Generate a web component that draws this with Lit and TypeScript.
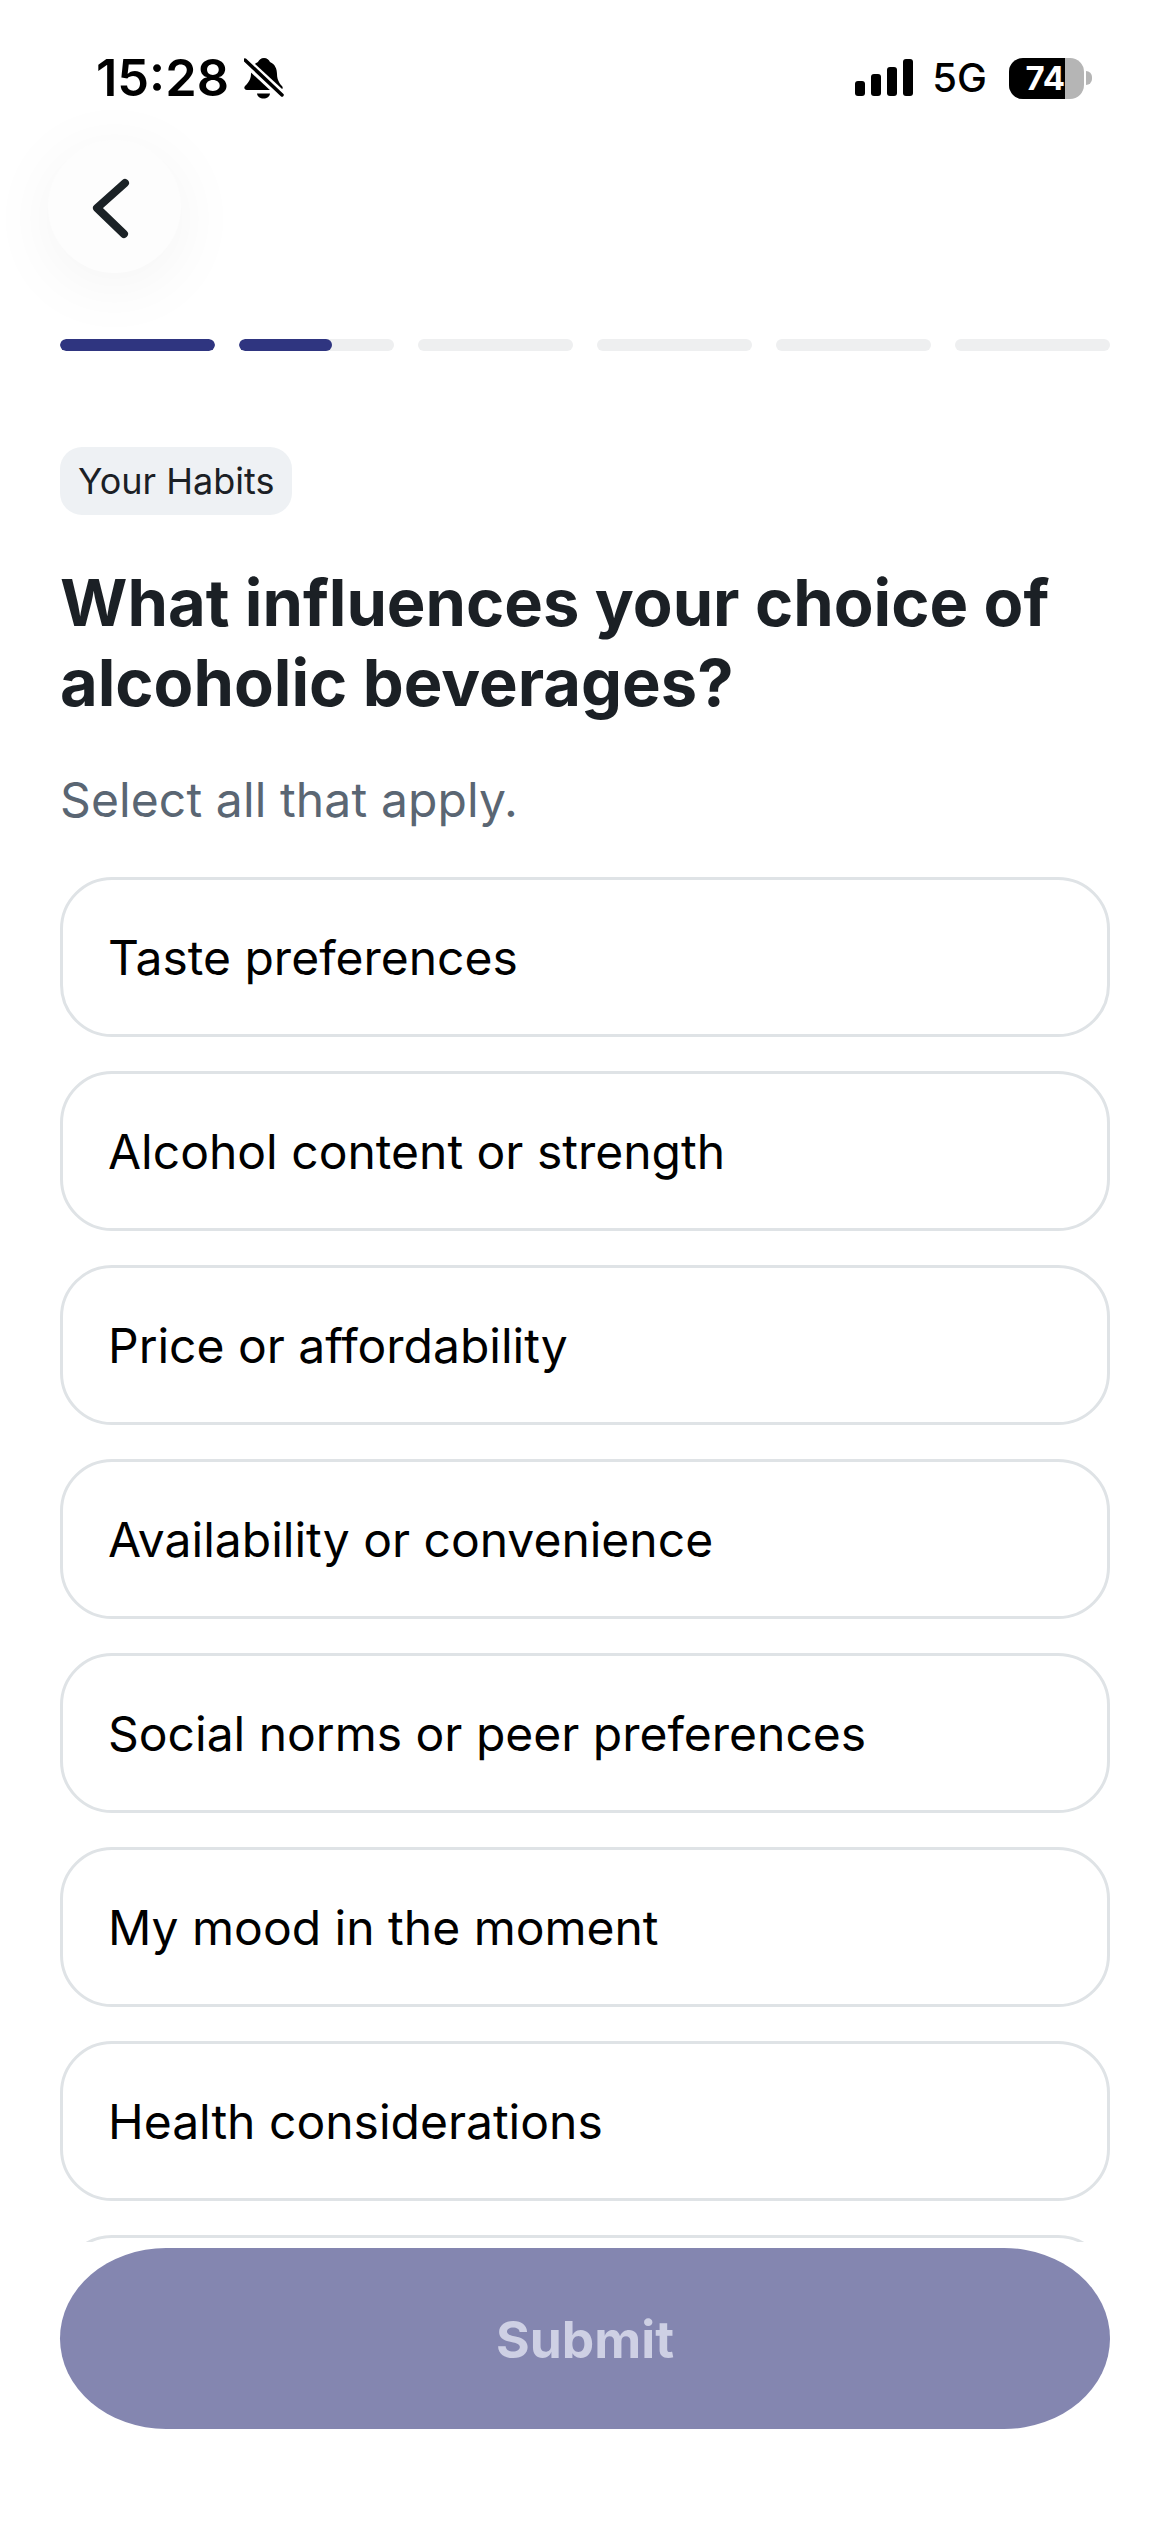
import { LitElement, html, css } from "lit";
import { customElement } from "lit/decorators.js";

const OPTIONS = [
  "Taste preferences",
  "Alcohol content or strength",
  "Price or affordability",
  "Availability or convenience",
  "Social norms or peer preferences",
  "My mood in the moment",
  "Health considerations",
  "",
];
const SEGMENTS = [100, 60, 0, 0, 0, 0];

@customElement("app-root")
export class AppRoot extends LitElement {
  static styles = css`
    :host {
      display: flex;
      flex-direction: column;
      width: 1170px;
      height: 2532px;
      overflow: hidden;
      background: #fff;
      font-family: Inter, "Liberation Sans", sans-serif;
      color: #1b2025;
    }
    .status {
      flex: none;
      height: 140px;
      display: flex;
      justify-content: space-between;
      align-items: flex-start;
      padding: 51px 78px 0 96px;
      box-sizing: border-box;
      color: #000;
    }
    .status-left,
    .status-right {
      display: flex;
      align-items: center;
    }
    .time {
      font-size: 50.5px;
      font-weight: 600;
      line-height: 54px;
    }
    .bell {
      width: 40px;
      height: 42px;
      margin-left: 15px;
    }
    .signal {
      width: 58px;
      height: 38px;
      display: block;
    }
    .net {
      font-size: 40px;
      font-weight: 500;
      line-height: 54px;
      margin-left: 19px;
    }
    .battery {
      display: flex;
      margin-left: 22px;
      width: 75px;
      height: 41px;
      border-radius: 14px;
      overflow: hidden;
      background: #b5b5b5;
    }
    .battery-fill {
      width: 56px;
      background: #000;
      color: #fff;
      font-size: 33px;
      font-weight: 700;
      line-height: 41px;
      text-align: right;
      box-sizing: border-box;
      white-space: nowrap;
    }
    .nub {
      width: 6px;
      height: 14px;
      margin-left: 2px;
      border-radius: 0 7px 7px 0;
      background: #b5b5b5;
    }
    .back {
      flex: none;
      width: 133px;
      height: 133px;
      margin-left: 48px;
      border-radius: 50%;
      background: #fdfdfd;
      box-shadow: 0 12px 70px rgba(0, 0, 0, 0.05);
      display: flex;
    }
    .back svg {
      width: 133px;
      height: 133px;
    }
    .progress {
      flex: none;
      display: flex;
      gap: 24px;
      margin: 66px 60px 0;
    }
    .seg {
      flex: 1;
      height: 12px;
      border-radius: 6px;
      background: #eeeff0;
      overflow: hidden;
    }
    .seg-fill {
      height: 100%;
      border-radius: 6px;
      background: #2f3580;
    }
    .content {
      flex: 1;
      min-height: 0;
      overflow: hidden;
      padding: 96px 60px 0;
    }
    .chip {
      display: inline-block;
      height: 68px;
      line-height: 68px;
      padding: 0 18px;
      box-sizing: border-box;
      border-radius: 22px;
      background: #eef1f4;
      font-size: 36px;
      vertical-align: top;
    }
    h1 {
      margin: 48px 0 0;
      font-size: 65px;
      line-height: 80px;
      font-weight: 700;
      color: #1b2025;
    }
    .sub {
      margin: 47px 0 0;
      font-size: 48px;
      letter-spacing: 0.12px;
      line-height: 60px;
      color: #5a6673;
    }
    .list {
      display: flex;
      flex-direction: column;
      gap: 34px;
      margin-top: 47px;
    }
    .option {
      flex: none;
      height: 160px;
      box-sizing: border-box;
      border: 3px solid #dfe3e6;
      border-radius: 52px;
      padding: 0 45px;
      display: flex;
      align-items: center;
      font-size: 48px;
      color: #000;
      background: #fff;
    }
    .footer {
      flex: none;
      height: 290px;
      box-sizing: border-box;
      padding: 6px 60px 0;
      background: #fff;
    }
    .submit {
      display: block;
      width: 100%;
      height: 181px;
      border: none;
      border-radius: 106px / 90.5px;
      background: #8486b0;
      color: #ced0e4;
      font-family: inherit;
      font-size: 51.5px;
      font-weight: 700;
    }
  `;

  render() {
    return html`
      <div class="status">
        <div class="status-left">
          <span class="time">15:28</span>
          <svg class="bell" viewBox="0 0 40 42">
            <path fill="#000" d="M20 1C23 1 25 3 26 5C31 7 33 12 33 17C33 23 36 27 38 29C39.5 31 38.5 33 36 33H3C.5 33-.5 31 1 29C3 27 7 23 7 17C7 12 9 7 14 5C15 3 17 1 20 1Z" />
            <path fill="#000" d="M13 36.5H26C25.5 40 23 41.5 19.5 41.5C16 41.5 13.5 40 13 36.5Z" />
            <path stroke="#fff" stroke-width="9" d="M-2 1 40 40" />
            <path stroke="#000" stroke-width="3.5" stroke-linecap="round" d="M1 3 38 38" />
          </svg>
        </div>
        <div class="status-right">
          <svg class="signal" viewBox="0 0 58 38">
            <rect x="0" y="22" width="10" height="15" rx="3" fill="#000" />
            <rect x="16" y="15" width="10" height="22" rx="3" fill="#000" />
            <rect x="32" y="8" width="10" height="29" rx="3" fill="#000" />
            <rect x="48" y="0" width="10" height="37" rx="3" fill="#000" />
          </svg>
          <span class="net">5G</span>
          <div class="battery"><div class="battery-fill">74</div></div>
          <div class="nub"></div>
        </div>
      </div>
      <div class="back">
        <svg viewBox="0 0 133 133" fill="none">
          <path d="M77 43 49 68 76 94" stroke="#1b2226" stroke-width="8" stroke-linecap="round" stroke-linejoin="round" />
        </svg>
      </div>
      <div class="progress">
        ${SEGMENTS.map(
          (v) => html`<div class="seg"><div class="seg-fill" style="width:${v}%"></div></div>`
        )}
      </div>
      <div class="content">
        <span class="chip">Your Habits</span>
        <h1>What influences your choice of<br />alcoholic beverages?</h1>
        <p class="sub">Select all that apply.</p>
        <div class="list">
          ${OPTIONS.map((o) => html`<div class="option">${o}</div>`)}
        </div>
      </div>
      <div class="footer"><button class="submit">Submit</button></div>
    `;
  }
}
